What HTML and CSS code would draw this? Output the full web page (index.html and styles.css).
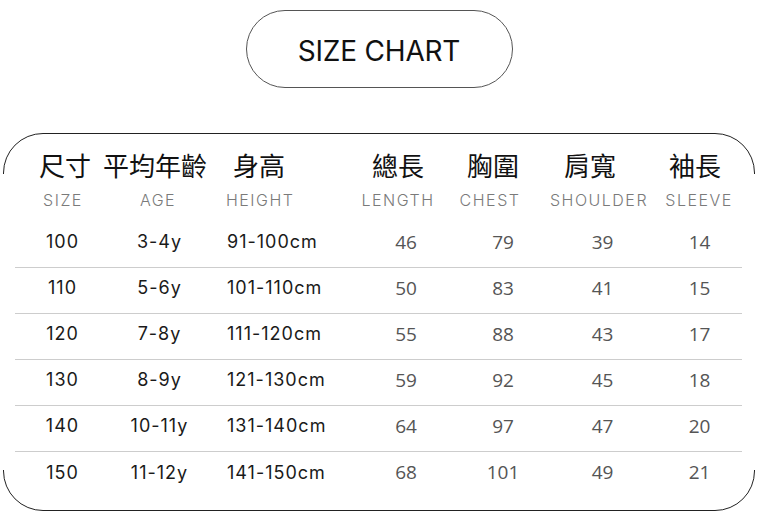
FILE: index.html
```html
<!DOCTYPE html>
<html lang="zh-Hant">
<head>
<meta charset="utf-8">
<title>Size Chart</title>
<link rel="stylesheet" href="styles.css">
</head>
<body>
<div class="page">
  <div class="pill">SIZE CHART</div>
  <div class="frame">
    <div class="row-zh">
      <span class="c">尺寸</span>
      <span class="c">平均年齡</span>
      <span class="c c3">身高</span>
      <span class="c">總長</span>
      <span class="c">胸圍</span>
      <span class="c">肩寬</span>
      <span class="c">袖長</span>
    </div>
    <div class="row-en">
      <span class="c">SIZE</span>
      <span class="c">AGE</span>
      <span class="c c3">HEIGHT</span>
      <span class="c">LENGTH</span>
      <span class="c">CHEST</span>
      <span class="c">SHOULDER</span>
      <span class="c">SLEEVE</span>
    </div>
    <div class="row">
      <span class="c l">100</span><span class="c l">3-4y</span><span class="c l c3">91-100cm</span>
      <span class="c r">46</span><span class="c r">79</span><span class="c r">39</span><span class="c r">14</span>
    </div>
    <div class="row">
      <span class="c l">110</span><span class="c l">5-6y</span><span class="c l c3">101-110cm</span>
      <span class="c r">50</span><span class="c r">83</span><span class="c r">41</span><span class="c r">15</span>
    </div>
    <div class="row">
      <span class="c l">120</span><span class="c l">7-8y</span><span class="c l c3">111-120cm</span>
      <span class="c r">55</span><span class="c r">88</span><span class="c r">43</span><span class="c r">17</span>
    </div>
    <div class="row">
      <span class="c l">130</span><span class="c l">8-9y</span><span class="c l c3">121-130cm</span>
      <span class="c r">59</span><span class="c r">92</span><span class="c r">45</span><span class="c r">18</span>
    </div>
    <div class="row">
      <span class="c l">140</span><span class="c l">10-11y</span><span class="c l c3">131-140cm</span>
      <span class="c r">64</span><span class="c r">97</span><span class="c r">47</span><span class="c r">20</span>
    </div>
    <div class="row last">
      <span class="c l">150</span><span class="c l">11-12y</span><span class="c l c3">141-150cm</span>
      <span class="c r">68</span><span class="c r">101</span><span class="c r">49</span><span class="c r">21</span>
    </div>
  </div>
</div>
</body>
</html>
```

FILE: styles.css
```css
html, body {
  margin: 0;
  padding: 0;
  background: #ffffff;
}

.page {
  width: 758px;
  height: 519px;
  overflow: hidden;
  font-family: "Inter", "Liberation Sans", sans-serif;
}

.pill {
  box-sizing: border-box;
  width: 267px;
  height: 78px;
  margin: 10px auto 0;
  padding-top: 3px;
  border: 1px solid #555;
  border-radius: 39px;
  display: flex;
  align-items: center;
  justify-content: center;
  font-family: "Inter", "Liberation Sans", sans-serif;
  font-size: 28px;
  font-weight: 400;
  letter-spacing: -0.2px;
  color: #111;
}

.frame {
  position: relative;
  box-sizing: border-box;
  width: 752px;
  height: 378px;
  margin: 45px 0 0 3px;
  border: 1px solid #222;
  border-radius: 40px;
  padding-top: 12px;
}

.frame::before {
  content: "";
  position: absolute;
  top: 40px;
  bottom: 40px;
  left: -1px;
  right: -1px;
  border-left: 1px solid #fff;
  border-right: 1px solid #fff;
}

.c {
  display: flex;
  justify-content: center;
  white-space: nowrap;
  min-width: 0;
}

.c3 {
  justify-content: flex-start;
}

.row-zh {
  display: grid;
  grid-template-columns: 100px 80px 150px 106px 84px 110px 100px;
  margin-left: 11px;
  height: 36px;
  align-items: center;
  font-family: "Noto Sans CJK TC", "Noto Sans CJK SC", sans-serif;
  font-size: 26px;
  font-weight: 400;
  color: #111;
}

.row-zh .c3 {
  padding-left: 38px;
}

.row-en {
  display: grid;
  grid-template-columns: 96px 94px 130px 126px 58px 160px 40px;
  margin: 8px 0 12px 11px;
  height: 20px;
  align-items: center;
  font-size: 16px;
  font-weight: 300;
  letter-spacing: 1.5px;
  color: #7a7a7a;
}

.row-en .c3 {
  padding-left: 21px;
}

.row {
  display: grid;
  grid-template-columns: 95px 99px 132px 130px 64px 135px 59px;
  box-sizing: border-box;
  height: 46px;
  margin: 0 12px 0 11px;
  padding-bottom: 6px;
  border-bottom: 1px solid #cdcdcd;
  align-items: center;
}

.row.last {
  border-bottom: none;
}

.row .c3 {
  padding-left: 18px;
}

.l {
  font-family: "Inter", "Liberation Sans", sans-serif;
  font-size: 18px;
  font-weight: 400;
  letter-spacing: 1px;
  color: #1a1a1a;
}

.r {
  font-family: "Open Sans", "Liberation Sans", sans-serif;
  font-size: 19px;
  font-weight: 400;
  color: #555;
}
```
